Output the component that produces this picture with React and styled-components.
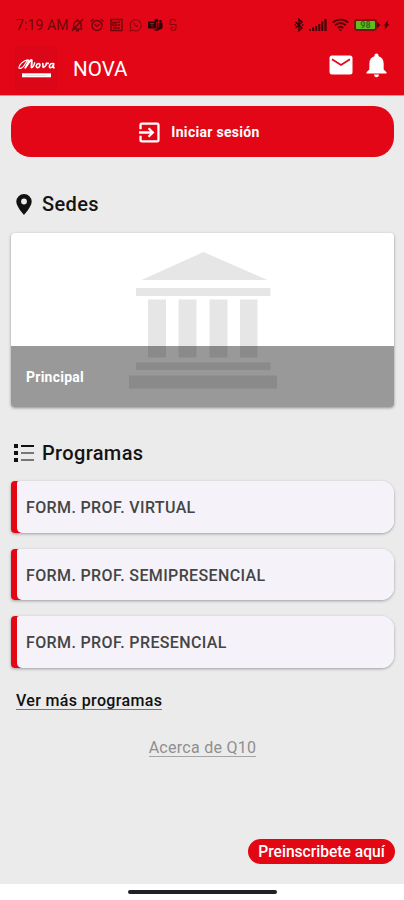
import React from 'react';
import styled, { createGlobalStyle } from 'styled-components';

const Global = createGlobalStyle`
  * { box-sizing: border-box; }
  body { margin: 0; background: #fff; font-family: Roboto, "Open Sans", sans-serif; }
`;

const Screen = styled.div`
  width: 404px;
  height: 900px;
  display: flex;
  flex-direction: column;
  background: #ebebeb;
  overflow: hidden;
`;

const Header = styled.header`
  height: 96px;
  flex: none;
  background: #e30617;
  border-bottom: 1px solid #f58a90;
`;

const StatusBar = styled.div`
  height: 46px;
  padding: 15px 14px 0 16px;
  display: flex;
  justify-content: space-between;
  color: #6b060d;
`;

const StatusGroup = styled.div`
  height: 20px;
  display: flex;
  align-items: center;
  gap: ${(p) => p.$gap}px;
`;

const Time = styled.span`
  font-family: Roboto, sans-serif;
  font-size: 14px;
  line-height: 20px;
  width: 50px;
  white-space: nowrap;
  letter-spacing: 0.1px;
  margin-right: -1px;
`;

const AppBar = styled.div`
  height: 43px;
  padding: 0 17px 0 16px;
  display: flex;
  align-items: center;
`;

const Logo = styled.div`
  width: 40px;
  height: 42px;
  background: #db0718;
  box-shadow: 0 0 2px rgba(110, 0, 0, 0.25);
`;

const AppTitle = styled.h1`
  flex: 1;
  margin: 2px 0 0 17px;
  color: #fff;
  font-size: 20.6px;
  line-height: 44px;
  font-weight: 400;
`;

const Actions = styled.div`
  display: flex;
  align-items: center;
  gap: 13px;
  margin-top: -5px;
`;

const Glyph = styled.svg`
  display: block;
  flex: none;
  overflow: visible;
`;

const Content = styled.main`
  flex: 1;
  padding: 10px 10px 0 11px;
  display: flex;
  flex-direction: column;
  align-items: stretch;
`;

const LoginButton = styled.button`
  height: 51px;
  flex: none;
  border: 0;
  border-radius: 20px;
  background: #e30617;
  color: #fff;
  display: flex;
  align-items: center;
  justify-content: center;
  gap: 11px;
  padding: 1px 6px 0 0;
  font: 700 14px/20px Roboto, sans-serif;
  letter-spacing: 0.3px;
`;

const Heading = styled.h2`
  height: 28px;
  margin: ${(p) => p.$top}px 0 0;
  display: flex;
  align-items: center;
  gap: ${(p) => p.$gap}px;
  padding-left: ${(p) => p.$left}px;
  font-size: 20px;
  line-height: 28px;
  font-weight: 500;
  letter-spacing: 0.35px;
  color: #141414;
`;

const CampusCard = styled.article`
  position: relative;
  height: 174px;
  flex: none;
  margin-top: 15px;
  border-radius: 4px;
  background: #fff;
  overflow: hidden;
  box-shadow: 0 1px 3px rgba(0, 0, 0, 0.4);
  display: flex;
  justify-content: center;
`;

const CampusLabel = styled.div`
  position: absolute;
  inset: 113px 0 0;
  display: flex;
  align-items: center;
  padding-left: 15px;
  background: rgba(0, 0, 0, 0.4);
  color: #fff;
  font-size: 14px;
  font-weight: 700;
  letter-spacing: 0.25px;
`;

const ProgramList = styled.ul`
  list-style: none;
  margin: 14.3px 0 0;
  padding: 0;
  display: flex;
  flex-direction: column;
  gap: 15.6px;
`;

const Program = styled.li`
  height: 51.7px;
  display: flex;
  border-radius: 4px 13px 13px 4px;
  background: linear-gradient(90deg, #e30613 20px, #f5f3f9 20px);
  overflow: hidden;
  padding-left: 6px;
  box-shadow: 0 1px 3px rgba(30, 30, 45, 0.38);
`;

const ProgramName = styled.div`
  flex: 1;
  padding-left: 9px;
  background: #f5f3f9;
  border-radius: 2px 0 0 5px;
  color: #454545;
  font-size: 16px;
  font-weight: 500;
  letter-spacing: 0.37px;
  line-height: 54px;
`;

const TextLink = styled.a`
  align-self: ${(p) => (p.$muted ? 'center' : 'flex-start')};
  margin: ${(p) => (p.$muted ? '28px 0 0 0' : '23.500px 0 0 5px')};
  font-size: 16px;
  line-height: 20px;
  font-weight: ${(p) => (p.$muted ? 400 : 500)};
  letter-spacing: ${(p) => (p.$muted ? 0.28 : 0.35)}px;
  color: ${(p) => (p.$muted ? '#8f8f8f' : '#111')};
  border-bottom: 1px solid ${(p) => (p.$muted ? '#a5a5a5' : '#777')};
  height: 19px;
`;

const EnrollButton = styled.button`
  align-self: flex-end;
  height: 25px;
  width: 147px;
  margin: auto -1px 20px 0;
  padding: 2px 0 0;
  border: 0;
  border-radius: 13px;
  background: #e30613;
  color: #fff;
  font: 500 15.6px/23px Roboto, sans-serif;
  white-space: nowrap;
`;

const NavBar = styled.footer`
  height: 16px;
  flex: none;
  background: #fff;
  display: flex;
  justify-content: center;
  padding-top: 6px;
`;

const HomeHandle = styled.div`
  width: 149px;
  height: 4px;
  border-radius: 2px;
  background: #202124;
  margin-left: 1px;
`;

const programs = ['FORM. PROF. VIRTUAL', 'FORM. PROF. SEMIPRESENCIAL', 'FORM. PROF. PRESENCIAL'];

const line = { fill: 'none', stroke: 'currentColor', strokeWidth: 1.4 };

const MutedBell = () => (
  <Glyph width="13" height="14" viewBox="0 0 13 14" {...line}>
    <path d="M1 11h10.500M2.800 10.500V6a3.700 3.700 0 0 1 7.300 0v4.500M5 12.800h3M12 1L1 13M6.500 1v1.500" />
  </Glyph>
);

const Alarm = () => (
  <Glyph width="14" height="14" viewBox="0 0 14 14" {...line}>
    <circle cx="7" cy="7.5" r="5" />
    <path d="M4.5 6.2L7 8.3l2.6-2.1M.7 3.4L3.5 1M13.3 3.4L10.5 1" />
  </Glyph>
);

const NewsBox = () => (
  <Glyph width="13" height="14" viewBox="0 0 13 14" {...line}>
    <path d="M1 1.5h11v11H1zM3 4.5h3v3H3zM7.5 4.3H10M7.5 7H10M3 10h7" />
  </Glyph>
);

const WhatsApp = () => (
  <Glyph width="13" height="14" viewBox="0 0 13 14" fill="none" stroke="#8c0810" strokeWidth="1.1">
    <path d="M1 13l.8-3A5.6 5.6 0 1 1 4 12.200z" />
    <path d="M4.800 4.300c-1.500 1.400 1.800 5.500 4 4.800l.6-1.200-1.500-.8-.8.8-1.500-1.600.6-.8z" fill="#8c0810" stroke="none" />
  </Glyph>
);

const Teams = () => (
  <Glyph width="15" height="14" viewBox="0 0 15 14" fill="#29080a">
    <path d="M0 3.500h8v7H0z" />
    <circle cx="8.500" cy="2.600" r="1.900" />
    <circle cx="12.500" cy="3.500" r="1.400" />
    <path d="M8.600 5h6v4.500a2.500 2.500 0 0 1-3 2 4 4 0 0 1-6-.1h3z" />
    <path d="M2 5.500h4M4 5.500V9M10.800 5.500v4" stroke="#b00a17" strokeWidth="1" />
  </Glyph>
);

const Hook = () => (
  <Glyph width="8" height="14" viewBox="0 0 8 14" fill="none" stroke="#8c0810" strokeWidth="1.200">
    <path d="M6.800 3.500C6.800.5 1.200.5 1.200 3.500V6.500H7V9.500c0 3.600-5 3.600-5 .8 0-1.500 2-1.500 2.500-.5" />
  </Glyph>
);

const Bluetooth = () => (
  <Glyph width="10" height="14" viewBox="0 0 10 16" fill="none" stroke="#2b0507" strokeWidth="1.600">
    <path d="M1 4.500l7.500 7L5 14.500v-13l3.500 3-7.500 7M0 8h1.500M8.500 8H10" />
  </Glyph>
);

const Signal = () => (
  <Glyph width="18" height="12" viewBox="0 0 18 12" fill="#3b0507">
    <path d="M0 10h2v2H0zM3.200 8.500h2V12h-2zM6.200 7h2v5h-2zM9.300 5h2v7h-2zM12.300 2.500h2V12h-2zM15.400 0h2.200v12h-2.200z" />
  </Glyph>
);

const Wifi = () => (
  <Glyph width="17" height="14" viewBox="0 0 17 14" fill="none" stroke="#4b0507" strokeWidth="1.800">
    <path d="M.7 4.700a11.500 11.500 0 0 1 15.600 0M3.200 7.300a7.800 7.800 0 0 1 10.600 0M5.800 10a4 4 0 0 1 5.400 0" />
    <circle cx="8.500" cy="12" r="1.100" fill="#3b0507" stroke="none" />
  </Glyph>
);

const BatteryShape = styled.div`
  width: 23px;
  height: 12px;
  border: 2px solid #7c130f;
  border-radius: 3px;
  background: #62bd22;
  color: #2e6c12;
  font: 700 9px/8px Roboto, sans-serif;
  text-align: center;
`;

const ChargeTip = () => (
  <Glyph width="12" height="12" viewBox="0 0 12 12" fill="#4b0507">
    <path d="M-1 3l3.500 3L-1 9zM10 1.500L5.500 6.700h2L6.500 10.500l5-5.200H9.500z" />
  </Glyph>
);

const NovaMark = () => (
  <Glyph width="40" height="42" viewBox="0 0 40 42" fill="none" stroke="#fff" strokeLinecap="round" strokeLinejoin="round">
    <path strokeWidth="1.200" d="M11.500 12.800C7 13.500 3 18.500 2.800 20.800c1 1.200 3.700.4 5.200-2l3.200-5c1-1.300 2-.7 1.300.5L9 21" />
    <path strokeWidth="1.900" d="M9.500 20.500l5-7.200c1-.7 1.500-.2 1.300.8l-.3 6.200" />
    <path strokeWidth="1.400" d="M15.500 20.600c1.500.3 2.200-1.500 3.200-4.800" />
    <path strokeWidth="1.600" d="M22.500 16.500c-2.400.1-3.100 4-1 4.200 2.500.1 3.500-4.100 1-4.200zM26.800 16.500l.3 4c1.900-.8 3.300-2.500 3.200-4.100h2" />
    <path strokeWidth="1.600" d="M36.500 16.500c-2.800-.3-4 3.600-2.300 4.200 1.900.2 3.300-2.300 3.500-4.200l-.5 4.200h1" />
    <path strokeWidth="4" strokeLinecap="butt" d="M6 28.300h29" />
    <path strokeWidth=".5" stroke="#eeb0b4" d="M10 28.500h20" />
  </Glyph>
);

const Mail = () => (
  <Glyph width="24" height="20" viewBox="0 0 24 20">
    <rect x=".5" y=".5" width="23" height="19" rx="2.500" fill="#fff" />
    <path d="M3 4.200l9 5.700 9-5.700" fill="none" stroke="#e30617" strokeWidth="1.800" />
  </Glyph>
);

const Bell = () => (
  <Glyph width="21" height="25" viewBox="0 0 22 25" fill="#fff">
    <path d="M11 0c1.300 0 2.100.8 2.100 2v.8c3.500.9 5.400 3.800 5.400 7.500v6.300l3 3V21H.5v-1.400l3-3v-6.300c0-3.700 1.900-6.600 5.400-7.500V2c0-1.200.8-2 2.100-2zM8.400 22h5.200c0 1.700-1.100 2.800-2.600 2.800S8.400 23.700 8.400 22z" />
  </Glyph>
);

const EnterBox = () => (
  <Glyph width="21" height="21" viewBox="0 0 22 22" fill="none" stroke="#fff" strokeWidth="2.400">
    <path d="M1.600 7.500V3A1.400 1.400 0 0 1 3 1.600h16A1.400 1.400 0 0 1 20.400 3v16a1.400 1.400 0 0 1-1.400 1.400H3A1.400 1.400 0 0 1 1.600 19v-4.500M0 11h14M10 6.500l4.500 4.500-4.500 4.500" />
  </Glyph>
);

const Pin = () => (
  <Glyph width="16" height="21" viewBox="0 0 16 21" fill="#111">
    <path fillRule="evenodd" d="M8 0a7.700 7.700 0 0 0-7.700 7.600C.3 13 8 21 8 21s7.700-8 7.700-13.400A7.700 7.700 0 0 0 8 0zm0 10.400a2.900 2.900 0 1 1 0-5.800 2.900 2.900 0 0 1 0 5.800z" />
  </Glyph>
);

const BulletList = () => (
  <Glyph width="20" height="18" viewBox="0 0 20 18">
    <path fill="#111" d="M0 0h4v4H0zM0 7h4v4H0zM0 14h4v4H0z" />
    <path fill="#111" d="M7 1h13v2H7z" />
    <path fill="#777" d="M7 8h13v2H7zM7 15h13v2H7z" />
  </Glyph>
);

const Building = () => (
  <Glyph width="148" height="174" viewBox="0 0 148 174" fill="#e6e6e6">
    <path d="M74.500 19L138.500 47H12.500zM7 55h134.500v8H7zM19 66.500h18v58H19zM49.500 66.500h18v58h-18zM80.500 66.500h18v58h-18zM111 66.500h17.500v58H111zM7 129.500h134.500v7.500H7zM0 142.500h148v13H0z" />
  </Glyph>
);

export default function App() {
  return (
    <Screen>
      <Global />
      <Header>
        <StatusBar>
          <StatusGroup $gap={6}>
            <Time>7:19 AM</Time>
            <MutedBell />
            <Alarm />
            <NewsBox />
            <WhatsApp />
            <Teams />
            <Hook />
          </StatusGroup>
          <StatusGroup $gap={5}>
            <Bluetooth />
            <Signal />
            <Wifi />
            <StatusGroup $gap={1}>
              <BatteryShape>98</BatteryShape>
              <ChargeTip />
            </StatusGroup>
          </StatusGroup>
        </StatusBar>
        <AppBar>
          <Logo><NovaMark /></Logo>
          <AppTitle>NOVA</AppTitle>
          <Actions><Mail /><Bell /></Actions>
        </AppBar>
      </Header>
      <Content>
        <LoginButton><EnterBox />Iniciar sesión</LoginButton>
        <Heading $top={33} $left={5} $gap={10}><Pin />Sedes</Heading>
        <CampusCard>
          <Building />
          <CampusLabel>Principal</CampusLabel>
        </CampusCard>
        <Heading $top={32} $left={3} $gap={8}><BulletList />Programas</Heading>
        <ProgramList>
          {programs.map((name) => (
            <Program key={name}><ProgramName>{name}</ProgramName></Program>
          ))}
        </ProgramList>
        <TextLink>Ver más programas</TextLink>
        <TextLink $muted>Acerca de Q10</TextLink>
        <EnrollButton>Preinscribete aquí</EnrollButton>
      </Content>
      <NavBar><HomeHandle /></NavBar>
    </Screen>
  );
}
